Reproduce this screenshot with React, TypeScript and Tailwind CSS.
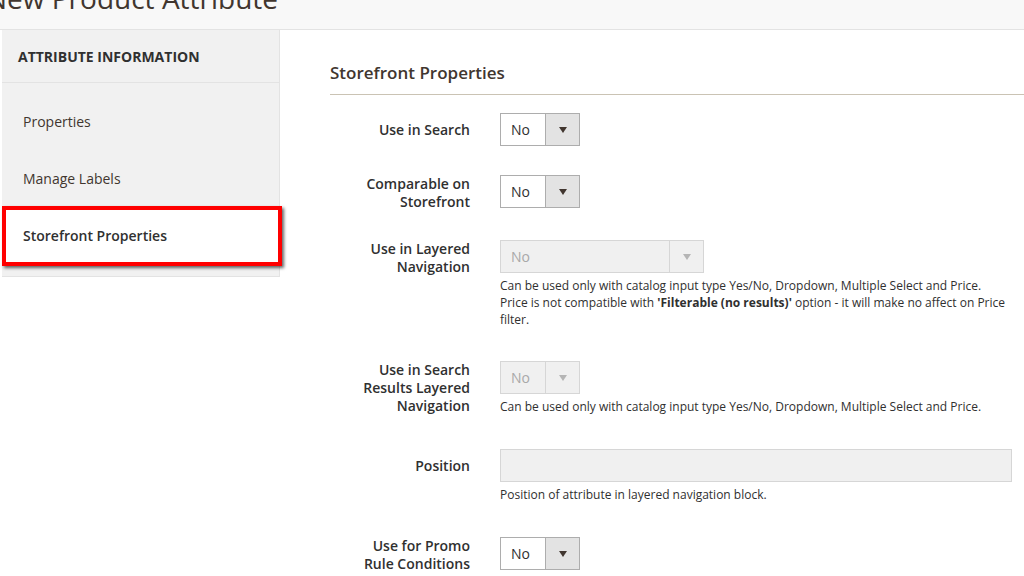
import React from "react";

const Sel = ({ w, disabled }: { w: string; disabled?: boolean }) => (
  <div className={`flex h-[33px] ${w} border ${disabled ? "border-[#d6d6d6] bg-[#f0f0f0] text-[#a9a9a9]" : "border-[#adadad] bg-white text-[#303030]"}`}>
    <div className="flex-1 pl-[10px] leading-[31px] text-[14px]">No</div>
    <div className={`w-[34px] flex items-center justify-center border-l ${disabled ? "border-[#d6d6d6] bg-[#f0f0f0]" : "border-[#adadad] bg-[#e3e3e3]"}`}>
      <div className={`w-0 h-0 border-l-[4px] border-r-[4px] border-t-[6px] border-l-transparent border-r-transparent ${disabled ? "border-t-[#b5b5b5]" : "border-t-[#41362f]"}`} />
    </div>
  </div>
);

const Row = ({ label, children, mt, pt }: { label: React.ReactNode; children: React.ReactNode; mt: string; pt: string }) => (
  <div className={`flex ${mt}`}>
    <div className={`w-[140px] text-right text-[14px] leading-[18px] font-semibold text-[#303030] ${pt}`}>{label}</div>
    <div className="ml-[30px] flex-1">{children}</div>
  </div>
);

const Note = ({ children }: { children: React.ReactNode }) => (
  <div className="text-[12px] leading-[17px] text-[#303030] mt-[4px]">{children}</div>
);

export default function App() {
  return (
    <div className="w-[1024px] h-[576px] overflow-hidden bg-white relative" style={{ fontFamily: '"Open Sans", sans-serif' }}>
      <div className="h-[30px] bg-[#f8f8f8] border-b border-[#e3e3e3] overflow-hidden">
        <div className="text-[28px] leading-[28px] text-[#41362f] mt-[-16px] ml-[-14px]">New Product Attribute</div>
      </div>
      <div className="flex">
        <div className="w-[278px] ml-[2px] h-[247px] bg-[#f1f1f1] border-r border-b border-[#e3e3e3]">
          <div className="h-[53px] border-b border-[#e3e3e3] pl-[16px] flex items-center text-[14px] font-bold text-[#303030]">ATTRIBUTE INFORMATION</div>
          <div className="pt-[10px]">
            <div className="h-[57px] pl-[21px] flex items-center text-[14px] text-[#41362f]">Properties</div>
            <div className="h-[57px] pl-[21px] flex items-center text-[14px] text-[#41362f]">Manage Labels</div>
            <div className="h-[55px] mt-[1px] pl-[21px] flex items-center text-[14px] font-semibold text-[#303030] bg-white border-l-[3px] border-[#eb5202]">
              <span className="-ml-[3px]">Storefront Properties</span>
            </div>
          </div>
        </div>
        <div className="ml-[50px] flex-1">
          <div className="mt-[32px] text-[17px] font-semibold text-[#41362f] leading-[22px]">Storefront Properties</div>
          <div className="mt-[10px] border-b border-[#cac3b4]" />
          <Row mt="mt-[18px]" pt="pt-[8px]" label="Use in Search"><Sel w="w-[80px]" /></Row>
          <Row mt="mt-[29px]" pt="pt-0" label={<>Comparable on<br />Storefront</>}><Sel w="w-[80px]" /></Row>
          <Row mt="mt-[29px]" pt="pt-0" label={<>Use in Layered<br />Navigation</>}>
            <Sel w="w-[204px]" disabled />
            <Note>Can be used only with catalog input type Yes/No, Dropdown, Multiple Select and Price.<br />Price is not compatible with <b>'Filterable (no results)'</b> option - it will make no affect on Price filter.</Note>
          </Row>
          <Row mt="mt-[33px]" pt="pt-0" label={<>Use in Search<br />Results Layered<br />Navigation</>}>
            <Sel w="w-[80px]" disabled />
            <Note>Can be used only with catalog input type Yes/No, Dropdown, Multiple Select and Price.</Note>
          </Row>
          <Row mt="mt-[34px]" pt="pt-[8px]" label="Position">
            <div className="w-[512px] h-[33px] border border-[#d6d6d6] bg-[#f0f0f0]" />
            <Note>Position of attribute in layered navigation block.</Note>
          </Row>
          <Row mt="mt-[34px]" pt="pt-0" label={<>Use for Promo<br />Rule Conditions</>}><Sel w="w-[80px]" /></Row>
        </div>
      </div>
      <div className="absolute left-[2px] top-[206px] w-[280px] h-[60px] border-[4px] border-[#ff0000] shadow-[2px_2px_3px_rgba(0,0,0,0.6)]" />
    </div>
  );
}
